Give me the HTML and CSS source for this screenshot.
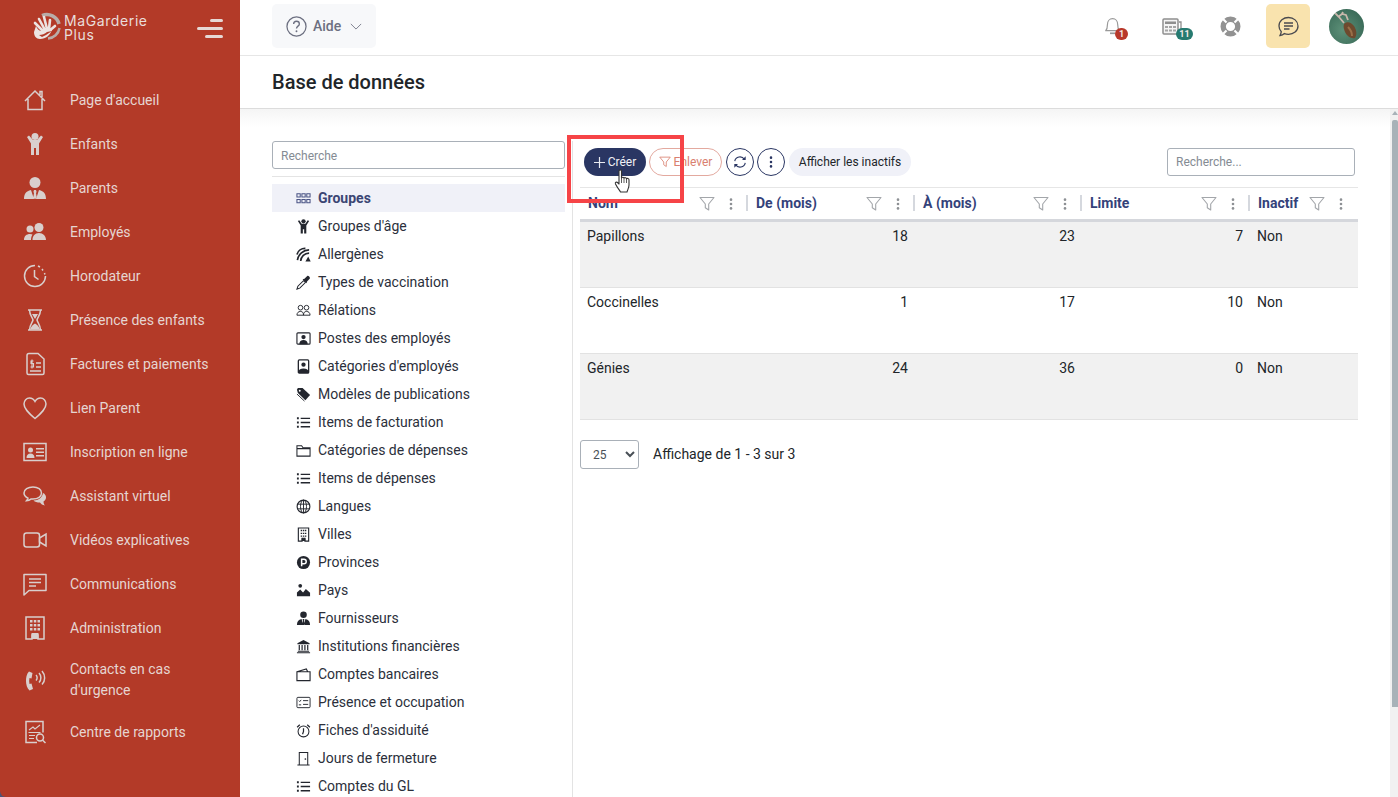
FILE: index.html
```html
<!DOCTYPE html>
<html lang="fr">
<head>
    <meta charset="UTF-8">
    <title>Base de données</title>
    <link rel="stylesheet" href="styles.css">
</head>
<body>
    <svg class="sprite">
        <symbol id="filter" viewBox="0 0 16 16"><path d="M1 1.500h14L9.700 8v6L6.300 11.700V8z" fill="none" stroke="currentColor" stroke-width="1.100" stroke-linejoin="round"/></symbol>
        <symbol id="dots" viewBox="0 0 4 16"><circle cx="2" cy="3" r="1.500" fill="currentColor"/><circle cx="2" cy="8" r="1.500" fill="currentColor"/><circle cx="2" cy="13" r="1.500" fill="currentColor"/></symbol>
        <symbol id="list" viewBox="0 0 16 16"><path d="M5 3.500h10M5 8h10M5 12.500h10" stroke="currentColor" stroke-width="1.400"/><path d="M1 2.500h2v2H1zM1 7h2v2H1zM1 11.500h2v2H1z" fill="currentColor"/></symbol>
    </svg>

    <aside class="sidebar">
        <div class="brand">
            <svg class="brand-mark" width="30" height="30" viewBox="0 0 30 30">
                <path d="M10 4.500A12.500 12.500 0 0 1 27 13" fill="none" stroke="#b9aca8" stroke-width="3.500"/>
                <path d="M27.500 17A12.500 12.500 0 0 1 16 27.500" fill="none" stroke="#b9aca8" stroke-width="2.500"/>
                <path d="M12 21L3 12M13 19L7 8M15 18L12 6M17 18l1-9M16 21l7-6" stroke="#ece4e2" stroke-width="2.600" stroke-linecap="round"/>
                <path d="M4 15c2 5 5 6 9 3l7 1c-2 5-6 9-12 9-4 0-6-3-6-7z" fill="#ece4e2"/>
                <path d="M7 24c3 0 6-1 8-3l5-1-6 4-4 2z" fill="#b33a28"/>
            </svg>
            <div class="brand-name">MaGarderie<br>Plus</div>
            <div class="burger"><span class="bar-short"></span><span class="bar-long"></span><span class="bar-mid"></span></div>
        </div>
        <nav>
            <a class="nav-item"><svg viewBox="0 0 24 24"><path d="M2 13L12 3l10 10M5 11v10.500h14V11M17 7V3.500h2V9" class="ln"/></svg><span>Page d'accueil</span></a>
            <a class="nav-item"><svg viewBox="0 0 24 24"><circle cx="12" cy="4.500" r="3.500" class="fl"/><path d="M4 5l2-1.500 4 4.500h4l4-4.500L20 5l-4 6.500V23h-3v-7h-2v7H8V11.500z" class="fl"/></svg><span>Enfants</span></a>
            <a class="nav-item"><svg viewBox="0 0 24 24"><circle cx="12" cy="6.500" r="5.500" class="fl"/><path d="M1 23c0-5 2-8 7-9l3 9zM23 23c0-5-2-8-7-9l-3 9zM11 14h2l.6 2-.6 1 .8 5-1.800 1-1.800-1 .8-5-.6-1z" class="fl"/></svg><span>Parents</span></a>
            <a class="nav-item"><svg viewBox="0 0 24 24"><circle cx="16" cy="7.500" r="4.500" class="fl"/><circle cx="7" cy="9" r="3.500" class="fl"/><path d="M1 20c0-4 2.500-6 6-6 1 0 2 .2 2.500.5C8.500 16 8 18 8 20zM9.500 20c0-4 2.500-7 6.500-7s7 3 7 7z" class="fl"/></svg><span>Employés</span></a>
            <a class="nav-item"><svg viewBox="0 0 24 24"><path d="M12 1.500A10.500 10.500 0 1 0 22.500 12" class="ln"/><path d="M15 2l2 1M19 5l1 1.500M21.500 9l.4 1.500" class="ln"/><path d="M11.500 6v6.500l4 3" class="ln"/></svg><span>Horodateur</span></a>
            <a class="nav-item"><svg viewBox="0 0 24 24"><path d="M5 2h14M5 22h14M6.500 2c0 5 3 7.500 3.500 10-.5 2.500-3.500 5-3.500 10M17.500 2c0 5-3 7.500-3.500 10 .5 2.500 3.500 5 3.500 10" class="ln"/><path d="M7 21.500c1-3 3-5 5-6 2 1 4 3 5 6zM9 6h6l-3 5z" class="fl"/></svg><span>Présence des enfants</span></a>
            <a class="nav-item"><svg viewBox="0 0 24 24"><path d="M4 3.500c0-1 .5-2 2-2h9l6 5.500v14c0 1-.5 1.500-1.500 1.500H5.500C4.500 22.500 4 22 4 21z" class="ln"/><path d="M13 11h5M13 15h5M7 19h11" class="ln"/><path d="M10.500 9H8v2.500h2.500V15H7.500M9 7.500v9" class="ln-thin"/></svg><span>Factures et paiements</span></a>
            <a class="nav-item"><svg viewBox="0 0 24 24"><path d="M12 22.500C5 16.500 1 12.500 1 8c0-3.500 2.500-6 5.500-6 2.300 0 4.300 1.300 5.500 3.500C13.200 3.300 15.200 2 17.500 2 20.500 2 23 4.500 23 8c0 4.500-4 8.500-11 14.500z" class="ln"/></svg><span>Lien Parent</span></a>
            <a class="nav-item"><svg viewBox="0 0 24 24"><path d="M1 3.500h22v17H1z" class="ln"/><circle cx="7.500" cy="10" r="2.500" class="fl"/><path d="M3.500 18c0-3 1.500-4.500 4-4.500s4 1.500 4 4.500zM13 8h8v1.500h-8zM13 11.500h8V13h-8zM13 15h8v1.500h-8z" class="fl"/></svg><span>Inscription en ligne</span></a>
            <a class="nav-item"><svg viewBox="0 0 24 24"><path d="M10 3C5 3 1 5.500 1 9c0 2.200 1.500 4 4 5.200-.2 1-.8 1.800-1.500 2.600 2 0 3.500-.8 4.800-1.900L10 15c5 0 8.500-2.500 8.500-6S15 3 10 3z" class="ln"/><path d="M20 9c2 1 3 2.500 3 4.500 0 1.800-1 3-2.500 4 0 1.500.5 3 1.500 4-2.500-.5-4-1.500-5-3-3 0-5-.5-6.500-2 5 0 9-3 9.500-7.500z" class="fl"/></svg><span>Assistant virtuel</span></a>
            <a class="nav-item"><svg viewBox="0 0 24 24"><rect x="1" y="5" width="15.500" height="14" rx="2.500" class="ln"/><path d="M16.500 10l6.500-4v12l-6.500-4z" class="ln"/></svg><span>Vidéos explicatives</span></a>
            <a class="nav-item"><svg viewBox="0 0 24 24"><path d="M1 2.500h22v16H6L1 23z" class="ln" stroke-linejoin="round"/><path d="M6 7h12M6 10.500h12M6 14h7" class="ln"/></svg><span>Communications</span></a>
            <a class="nav-item"><svg viewBox="0 0 24 24"><path d="M3 1h18v22h-6v-4H9v4H3z" class="ln"/><path d="M7 4h2.500v2.500H7zM10.800 4h2.500v2.500h-2.500zM14.500 4H17v2.500h-2.500zM7 8h2.500v2.500H7zM10.800 8h2.500v2.500h-2.500zM14.500 8H17v2.500h-2.500zM7 12h2.500v2.500H7zM10.800 12h2.500v2.500h-2.500zM14.500 12H17v2.500h-2.500zM8.500 17h7v6h-7z" class="fl"/></svg><span>Administration</span></a>
            <a class="nav-item nav-item-tall"><svg viewBox="0 0 24 24"><path d="M9.500 5L6 3.500C3.500 6 3 9.500 3 13s1 7 3.500 9.500l3.500-1.500-1.500-5.500-2 .5c-.5-2-.5-4 0-6l2 .5z" class="fl"/><path d="M13 7c1.500 1.500 1.500 4 0 5.500M16 5c2.500 2.500 2.500 7 0 9.500M19 3c3.500 4 3.500 10 0 13.500" class="ln"/></svg><span>Contacts en cas d'urgence</span></a>
            <a class="nav-item"><svg viewBox="0 0 24 24"><path d="M14 22.500H3v-21h17v11" class="ln"/><path d="M6 10l4-3 2 2 5-4M5.500 12.500h12M6 15.500h6M6 18.500h5" class="ln-thin"/><circle cx="17" cy="17.500" r="3.500" class="ln"/><path d="M19.500 20l3 3" class="ln"/></svg><span>Centre de rapports</span></a>
        </nav>
    </aside>

    <div class="main">
        <header class="topbar">
            <button class="help-btn">
                <svg width="21" height="21" viewBox="0 0 22 22"><circle cx="11" cy="11" r="10" fill="none" stroke="#6c6f80" stroke-width="1.300"/><path d="M8 8.500c0-2 1.500-3 3-3s3 1 3 2.800c0 2.300-3 2.300-3 4.700" fill="none" stroke="#6c6f80" stroke-width="1.400"/><circle cx="11" cy="16" r="1" fill="#6c6f80"/></svg>
                <span>Aide</span>
                <svg width="12" height="7" viewBox="0 0 14 8"><path d="M1 1l6 6 6-6" fill="none" stroke="#6c6f80" stroke-width="1"/></svg>
            </button>
            <div class="top-icons">
                <div class="top-icon top-bell">
                    <svg width="18" height="20" viewBox="0 0 21 23"><path d="M2 17c2-2 2-4 2-7 0-4 2.500-7 6-7s6 3 6 7c0 3 0 5 2 7z" fill="none" stroke="#999" stroke-width="1.400" stroke-linejoin="round"/><path d="M7 20h6" stroke="#999" stroke-width="2"/></svg>
                    <span class="badge badge-red">1</span>
                </div>
                <div class="top-icon top-news">
                    <svg width="20" height="17" viewBox="0 0 20 17"><rect x="1" y="1" width="15" height="15" rx="1" fill="#f4f4f4" stroke="#8f8f8f" stroke-width="1.500"/><path d="M3 3.500h11v2.500H3z" fill="#8f8f8f"/><path d="M3 8h3v2H3zM7 8h3v2H7zM11 8h3v2h-3zM3 11.500h3v2H3zM7 11.500h3v2H7zM11 11.500h3v2h-3z" fill="#a5a5a5"/><path d="M17 4h2v11h-2" fill="none" stroke="#8f8f8f" stroke-width="1.300"/></svg>
                    <span class="badge badge-green">11</span>
                </div>
                <div class="top-icon top-ring">
                    <svg width="21" height="21" viewBox="0 0 21 21"><circle cx="10.500" cy="10.500" r="7.300" fill="none" stroke="#929292" stroke-width="5.400"/><path d="M2.500 2.500l4 4M18.500 2.500l-4 4M2.500 18.500l4-4M18.500 18.500l-4-4" stroke="#fff" stroke-width="2.200"/></svg>
                </div>
                <button class="chat-btn">
                    <svg width="21" height="21" viewBox="0 0 21 21"><path d="M10.500 1.500c-5 0-9.500 3.300-9.500 8.500 0 2.500 1 4.300 2.300 5.700-.2 1.500-.6 2.500-1.300 3.800 1.800-.2 3.300-.9 4.400-1.900 1.200.5 2.600.7 4.100.7 5 0 9.500-3.300 9.500-8.300s-4.500-8.500-9.500-8.500z" fill="none" stroke="#4a4a4f" stroke-width="1.300"/><path d="M6 7h9M6 10h9M6 13h5.500" stroke="#4a4a4f" stroke-width="1.500"/></svg>
                </button>
                <div class="avatar">
                    <svg width="35" height="35" viewBox="0 0 35 35"><path d="M15 15c3-3 7-2 10 2 3 5 3 9 1 12-4 1-8-2-10-6-1-3-2-5-1-8z" fill="#6e4a2e"/><path d="M19 18c2 2 4 6 4 9" stroke="#9a7048" stroke-width="2" fill="none"/><path d="M5 3l5 5 5 6M9 8l4-3 4 1 2 5M13 5l1-2" stroke="#c9b8ac" stroke-width="1.800" fill="none"/></svg>
                </div>
            </div>
        </header>
        <div class="page-title"><h1>Base de données</h1></div>
        <div class="content">
            <div class="content-inner">
                <section class="side-list">
                    <input class="side-search" type="text" placeholder="Recherche">
                    <hr class="side-rule">
                    <ul class="db-list">
                        <li class="active"><svg viewBox="0 0 16 16"><path d="M1 3h3.500v3.500H1zM6.300 3h3.500v3.500H6.300zM11.500 3H15v3.500h-3.500zM1 9h3.500v3.500H1zM6.300 9h3.500v3.500H6.300zM11.500 9H15v3.500h-3.500z" fill="none" stroke="currentColor" stroke-width="1.100"/></svg>Groupes</li>
                        <li><svg viewBox="0 0 16 16"><circle cx="8" cy="2.500" r="2.300" fill="currentColor"/><path d="M2 2l1.500-.7L6 5h4l2.500-3.700L14 2l-3 5v8.500H8.700V11H7.300v4.500H5V7z" fill="currentColor"/></svg>Groupes d'âge</li>
                        <li><svg viewBox="0 0 16 16"><path d="M1 8A9 9 0 0 1 10 1.500M1.500 14A13 13 0 0 1 14 3M5 15A9 9 0 0 1 14 6.500" fill="none" stroke="currentColor" stroke-width="1.800"/><path d="M10 15.500l3-5.500 2.700 5.500z" fill="currentColor"/></svg>Allergènes</li>
                        <li><svg viewBox="0 0 16 16"><path d="M1 15l1-3 6-6 2 2-6 6z" fill="none" stroke="currentColor" stroke-width="1.100"/><path d="M7 4.500l2-.5 3-3c1-.8 3.500 1.500 2.800 2.800l-3 3-.5 2z" fill="currentColor"/></svg>Types de vaccination</li>
                        <li><svg viewBox="0 0 16 16"><circle cx="4.800" cy="5" r="2.500" fill="none" stroke="currentColor"/><circle cx="11.200" cy="5" r="2.500" fill="none" stroke="currentColor"/><path d="M1 13c0-2.500 1.500-4 3.800-4s3.200 1.500 3.200 4zM8 13c0-2.500 1-4 3.200-4S15 10.500 15 13z" fill="none" stroke="currentColor"/></svg>Rélations</li>
                        <li><svg viewBox="0 0 16 16"><rect x="1" y="2" width="14" height="12" rx="1" fill="none" stroke="currentColor" stroke-width="1.200"/><circle cx="8" cy="6.500" r="2.300" fill="currentColor"/><path d="M3.500 14c0-3 2-4.500 4.500-4.500s4.500 1.500 4.500 4.500z" fill="currentColor"/></svg>Postes des employés</li>
                        <li><svg viewBox="0 0 16 16"><rect x="2.500" y="1" width="11" height="14" rx="1" fill="none" stroke="currentColor" stroke-width="1.400"/><circle cx="8" cy="6" r="2.300" fill="currentColor"/><path d="M3 15v-2c0-2 2-3 5-3s5 1 5 3v2z" fill="currentColor"/></svg>Catégories d'employés</li>
                        <li><svg viewBox="0 0 16 16"><path d="M1 3l1-2h5l8 7.500-5 5.500-8-7.500z" fill="currentColor"/><path d="M1 7.500l8 7.500" stroke="currentColor" fill="none"/><circle cx="4" cy="4" r="1" fill="#fff"/></svg>Modèles de publications</li>
                        <li><svg viewBox="0 0 16 16"><use href="#list"/></svg>Items de facturation</li>
                        <li><svg viewBox="0 0 16 16"><path d="M1 3h5l1.500 2H15v9H1zM1 6h14" fill="none" stroke="currentColor" stroke-width="1.100"/></svg>Catégories de dépenses</li>
                        <li><svg viewBox="0 0 16 16"><use href="#list"/></svg>Items de dépenses</li>
                        <li><svg viewBox="0 0 16 16"><circle cx="8" cy="8" r="6.800" fill="none" stroke="currentColor" stroke-width="1.200"/><ellipse cx="8" cy="8" rx="3.200" ry="6.800" fill="none" stroke="currentColor"/><path d="M8 1v14M1.500 5.500h13M1.500 10.500h13" stroke="currentColor" fill="none"/></svg>Langues</li>
                        <li><svg viewBox="0 0 16 16"><path d="M2.500 1h11v14h-4v-3h-3v3h-4z" fill="none" stroke="currentColor" stroke-width="1.200"/><path d="M5 3h1.500v1.500H5zM7.300 3h1.500v1.500H7.300zM9.500 3H11v1.500H9.500zM5 6h1.500v1.500H5zM7.300 6h1.500v1.500H7.300zM9.500 6H11v1.500H9.500zM5 9h1.500v1.500H5zM7.300 9h1.500v1.500H7.300zM9.500 9H11v1.500H9.500zM6 12h4v3H6z" fill="currentColor"/></svg>Villes</li>
                        <li><svg viewBox="0 0 16 16"><circle cx="8" cy="8" r="7" fill="currentColor"/><path d="M6 12V4.500h2.500a2.300 2.300 0 0 1 0 4.800H6" fill="none" stroke="#fff" stroke-width="1.600"/></svg>Provinces</li>
                        <li><svg viewBox="0 0 16 16"><circle cx="4.500" cy="3" r="2" fill="currentColor"/><path d="M1 14v-4l3.500-3 3 3 3-3.500 4.500 4V14z" fill="currentColor"/></svg>Pays</li>
                        <li><svg viewBox="0 0 16 16"><circle cx="8" cy="4" r="3.500" fill="currentColor"/><path d="M1 15c0-3.500 1.500-6 5-6.500l1.500 6.500zM15 15c0-3.500-1.500-6-5-6.500L8.500 15zM7.300 8.500h1.400l.3 1.200-.4.600.6 3.700-1.200 1-1.200-1 .6-3.700-.4-.6z" fill="currentColor"/></svg>Fournisseurs</li>
                        <li><svg viewBox="0 0 16 16"><path d="M8 1l6.500 3.500v1h-13v-1zM1 14h14v1.200H1zM2 12.500h12v1H2z" fill="currentColor"/><path d="M3.500 6.500v5.500M6.500 6.500v5.500M9.500 6.500v5.500M12.500 6.500v5.500" stroke="currentColor" stroke-width="1.300"/></svg>Institutions financières</li>
                        <li><svg viewBox="0 0 16 16"><path d="M1 5h14v9.500H1zM1 5l10-3 1.500 3" fill="none" stroke="currentColor" stroke-width="1.200"/></svg>Comptes bancaires</li>
                        <li><svg viewBox="0 0 16 16"><rect x="1" y="2.500" width="14" height="11" rx="1" fill="none" stroke="currentColor"/><path d="M7.500 6H13M7.500 10H13M3 6l1 1 1.500-1.800M3 10.500h2.500" fill="none" stroke="currentColor"/></svg>Présence et occupation</li>
                        <li><svg viewBox="0 0 16 16"><circle cx="8" cy="9" r="5.800" fill="none" stroke="currentColor" stroke-width="1.100"/><path d="M8 5.500V9l-1 3M1.200 4.500L4 1.800M14.800 4.500L12 1.800" fill="none" stroke="currentColor" stroke-width="1.300"/></svg>Fiches d'assiduité</li>
                        <li><svg viewBox="0 0 16 16"><path d="M1.500 15h13M3.500 15V1.500h9V15" fill="none" stroke="currentColor" stroke-width="1.100"/><circle cx="10" cy="8.500" r=".9" fill="currentColor"/></svg>Jours de fermeture</li>
                        <li><svg viewBox="0 0 16 16"><use href="#list"/></svg>Comptes du GL</li>
                    </ul>
                </section>
                <section class="grid-panel">
                    <div class="toolbar">
                        <button class="btn btn-create"><svg width="11" height="11" viewBox="0 0 11 11"><path d="M5.500 0v11M0 5.500h11" stroke="#e8e9f0" stroke-width="1.200"/></svg>Créer</button>
                        <button class="btn btn-remove"><svg width="12" height="12" viewBox="0 0 16 16"><use href="#filter"/></svg>Enlever</button>
                        <button class="btn-round"><svg width="14" height="14" viewBox="0 0 16 16"><path d="M2 7a6 6 0 0 1 11-2M14 9a6 6 0 0 1-11 2" fill="none" stroke="#2a3663" stroke-width="1.300"/><path d="M14.500 1.500v4.200h-4.200zM1.500 14.500v-4.200h4.200z" fill="#2a3663"/></svg></button>
                        <button class="btn-round"><svg width="4" height="14" viewBox="0 0 4 16"><use href="#dots"/></svg></button>
                        <button class="btn btn-inactive">Afficher les inactifs</button>
                        <input class="grid-search" type="text" placeholder="Recherche...">
                    </div>
                    <div class="data-grid">
                        <div class="head-cell"><span>Nom</span><svg class="ic-filter"><use href="#filter"/></svg><svg class="ic-dots"><use href="#dots"/></svg></div>
                        <div class="head-cell"><span>De (mois)</span><svg class="ic-filter"><use href="#filter"/></svg><svg class="ic-dots"><use href="#dots"/></svg></div>
                        <div class="head-cell"><span>À (mois)</span><svg class="ic-filter"><use href="#filter"/></svg><svg class="ic-dots"><use href="#dots"/></svg></div>
                        <div class="head-cell"><span>Limite</span><svg class="ic-filter"><use href="#filter"/></svg><svg class="ic-dots"><use href="#dots"/></svg></div>
                        <div class="head-cell head-last"><span>Inactif</span><svg class="ic-filter"><use href="#filter"/></svg><svg class="ic-dots"><use href="#dots"/></svg></div>

                        <div class="cell odd">Papillons</div><div class="cell num odd">18</div><div class="cell num odd">23</div><div class="cell num odd">7</div><div class="cell odd">Non</div>
                        <div class="cell">Coccinelles</div><div class="cell num">1</div><div class="cell num">17</div><div class="cell num">10</div><div class="cell">Non</div>
                        <div class="cell odd">Génies</div><div class="cell num odd">24</div><div class="cell num odd">36</div><div class="cell num odd">0</div><div class="cell odd">Non</div>
                    </div>
                    <div class="pager">
                        <select class="page-size"><option>25</option></select>
                        <span>Affichage de 1 - 3 sur 3</span>
                    </div>
                </section>
            </div>
            <div class="scrollbar"><div class="scroll-arrow"></div><div class="scroll-thumb"></div></div>
        </div>
    </div>

    <!-- annotation + mouse pointer over the page -->
    <div class="callout"></div>
    <svg class="pointer" width="18" height="24" viewBox="0 0 18 24"><path d="M5 2c0-1.500 2.500-1.500 2.500 0v7c.5-1 2.500-1 2.500.3.500-1 2.500-.8 2.500.5.700-.8 2.500-.5 2.500 1V16c0 3-1.500 5-2 7H6.500c-1-2-3-4-5-8-.7-1.500 1-2.500 2-1.500L5 15z" fill="#fff" stroke="#333" stroke-width="1.100" stroke-linejoin="round"/><path d="M7.500 9v5M10 9.500V14M12.500 10v4" stroke="#333" stroke-width=".8"/></svg>
</body>
</html>
```

FILE: styles.css
```css
* {
    box-sizing: border-box;
}

body {
    margin: 0;
    height: 100vh;
    display: flex;
    overflow: hidden;
    background-color: #4a5578;
    font-family: Roboto, "Liberation Sans", sans-serif;
    font-size: 14px;
    line-height: 21px;
    color: #212529;
}

.sprite {
    display: none;
}

/* sidebar */
.sidebar {
    width: 240px;
    flex-shrink: 0;
    background-color: #b33a28;
    border-bottom-left-radius: 6px;
    color: #e6d5d1;
}

.brand {
    height: 78px;
    display: flex;
    padding: 11px 17px 0 32px;
    align-items: flex-start;
}

.brand-mark {
    flex-shrink: 0;
}

.brand-name {
    margin-left: 2px;
    margin-top: 3px;
    font-family: Inter, sans-serif;
    font-size: 14px;
    line-height: 14px;
    letter-spacing: 0.6px;
    color: #e9dedb;
}

.burger {
    margin-left: auto;
    margin-top: 8px;
    width: 26px;
    display: flex;
    flex-direction: column;
    align-items: flex-end;
    gap: 5px;
}

.burger span {
    height: 3px;
    border-radius: 2px;
    background-color: #e6d8d5;
}

.bar-short {
    width: 13px;
}

.bar-long {
    width: 26px;
}

.bar-mid {
    width: 18px;
}

.nav-item {
    display: flex;
    align-items: center;
    min-height: 44px;
    padding: 9px 22px 9px 23px;
}

.nav-item svg {
    width: 24px;
    height: 24px;
    flex-shrink: 0;
    margin-right: 23px;
}

.ln {
    fill: none;
    stroke: #d9cfcd;
    stroke-width: 1.5;
}

.ln-thin {
    fill: none;
    stroke: #d9cfcd;
    stroke-width: 1.1;
}

.fl {
    fill: #d9cfcd;
}

/* top bar */
.main {
    flex: 1;
    min-width: 0;
    display: flex;
    flex-direction: column;
    background-color: #fff;
}

.topbar {
    height: 56px;
    flex-shrink: 0;
    display: flex;
    align-items: flex-start;
    padding: 4px 34px 0 32px;
    border-bottom: 1px solid #e6e6e6;
}

.help-btn {
    width: 104px;
    height: 44px;
    display: flex;
    align-items: center;
    padding: 0 0 0 14px;
    border: none;
    border-radius: 5px;
    background-color: #f7f8fa;
    color: #6c6f80;
    font: 500 14px Roboto, sans-serif;
}

.help-btn span {
    margin: 0 9px 0 6px;
}

.top-icons {
    margin-left: auto;
    display: flex;
    align-items: center;
}

.top-icon {
    position: relative;
    display: flex;
    justify-content: center;
}

.top-bell {
    width: 18px;
    margin-right: 40px;
}

.top-news {
    width: 20px;
    margin-right: 38px;
}

.top-ring {
    width: 21px;
    margin-right: 25px;
}

.badge {
    position: absolute;
    height: 12px;
    border-radius: 6px;
    font-size: 9px;
    font-weight: 700;
    line-height: 12px;
    text-align: center;
    color: #f3e9e6;
}

.badge-red {
    left: 11px;
    top: 12px;
    width: 13px;
    background-color: #b8382a;
}

.badge-green {
    left: 14px;
    top: 10px;
    width: 17px;
    background-color: #267a70;
}

.chat-btn {
    width: 44px;
    height: 44px;
    display: flex;
    align-items: center;
    justify-content: center;
    margin-right: 19px;
    border: none;
    border-radius: 5px;
    background-color: #f9e3ae;
}

.avatar {
    width: 35px;
    height: 35px;
    border-radius: 50%;
    overflow: hidden;
    background: radial-gradient(circle at 40% 60%, #5d9078, #2f5f4e);
}

.avatar svg {
    display: block;
}

/* page title */
.page-title {
    height: 53px;
    flex-shrink: 0;
    display: flex;
    align-items: center;
    padding: 1px 32px 0;
    border-bottom: 1px solid #dcdcdc;
}

.page-title h1 {
    margin: 0;
    font-size: 20px;
    font-weight: 500;
    color: #212529;
}

/* content */
.content {
    flex: 1;
    min-height: 0;
    display: flex;
}

.content-inner {
    flex: 1;
    display: flex;
    padding-left: 32px;
    overflow: hidden;
    background: linear-gradient(#f5f5f5, #fff 18px);
}

.side-list {
    width: 301px;
    flex-shrink: 0;
    margin-top: 32px;
    padding-right: 7px;
    border-right: 1px solid #e3e3e3;
}

.side-search,
.grid-search {
    height: 28px;
    border: 1px solid #a9b0b8;
    border-radius: 3px;
    padding: 0 8px;
    font: 12px Roboto, sans-serif;
    color: #212529;
}

.side-search::placeholder,
.grid-search::placeholder {
    color: #848b93;
}

.side-search {
    width: 100%;
    display: block;
    padding-top: 1px;
}

.side-rule {
    margin: 7px 0;
    border: none;
    border-top: 1px solid #e4e4e4;
}

.db-list {
    list-style: none;
    margin: 0;
    padding: 0;
}

.db-list li {
    height: 28px;
    display: flex;
    align-items: center;
    padding-left: 24px;
    color: #2b2f3b;
}

.db-list li svg {
    width: 15px;
    height: 15px;
    margin-right: 7px;
    flex-shrink: 0;
    color: #23262e;
}

.db-list li.active {
    background-color: #f0f1f8;
    color: #3b4573;
    font-weight: 700;
}

.db-list li.active svg {
    color: #4a5485;
}

/* grid panel */
.grid-panel {
    width: 785px;
    flex-shrink: 0;
    padding: 39px 0 0 7px;
}

.toolbar {
    height: 28px;
    display: flex;
    align-items: center;
    padding: 0 3px 0 4px;
    margin-bottom: 11px;
}

.btn {
    height: 28px;
    display: flex;
    align-items: center;
    justify-content: center;
    padding: 0;
    border: 1px solid transparent;
    border-radius: 14px;
    font: 12px Roboto, sans-serif;
}

.btn svg {
    margin-right: 3px;
}

.btn-create {
    width: 62px;
    background-color: #2a3663;
    color: #f0f1f6;
}

.btn-remove {
    width: 73px;
    margin-left: 3px;
    background-color: #fff;
    border-color: #e3a99f;
    color: #d9806f;
}

.btn-round {
    width: 28px;
    height: 28px;
    display: flex;
    align-items: center;
    justify-content: center;
    margin-left: 4px;
    padding: 0;
    border: 1px solid #2a3663;
    border-radius: 50%;
    background-color: #fff;
    color: #2a3663;
}

.btn-round + .btn-round {
    margin-left: 3px;
}

.btn-inactive {
    width: 122px;
    margin-left: 4px;
    background-color: #f0f1f8;
    color: #212529;
}

.grid-search {
    width: 188px;
    margin-left: auto;
}

.data-grid {
    width: 778px;
    display: grid;
    grid-template-columns: 168px 167px 167px 168px 1fr;
    border-top: 1px solid #e6e6e6;
}

.head-cell {
    height: 34px;
    display: flex;
    align-items: center;
    padding: 0 15px 0 8px;
    border-bottom: 3px solid #d5d7dc;
    background-image: linear-gradient(#d5d8de, #d5d8de);
    background-size: 2px 16px;
    background-position: right 7px;
    background-repeat: no-repeat;
    font-weight: 700;
    color: #34427a;
}

.head-last {
    background-image: none;
}

.ic-filter {
    width: 16px;
    height: 16px;
    margin-left: auto;
    color: #a3a6aa;
}

.ic-dots {
    width: 4px;
    height: 14px;
    margin-left: 14px;
    color: #8d9094;
}

.cell {
    height: 66px;
    padding: 4px 7px;
    border-bottom: 1px solid #e2e2e2;
}

.num {
    text-align: right;
}

.odd {
    background-color: #f1f1f1;
}

.pager {
    margin-top: 20px;
    display: flex;
    align-items: center;
}

.page-size {
    width: 59px;
    height: 29px;
    padding-left: 8px;
    margin-right: 14px;
    border: 1px solid #a9b0b8;
    border-radius: 3px;
    background-color: #fff;
    font: 12px Roboto, sans-serif;
    color: #495057;
}

.scrollbar {
    width: 8px;
    flex-shrink: 0;
    padding: 2px 0 0 2px;
    background-color: #f1f1f1;
}

.scroll-arrow {
    width: 0;
    margin: 0 auto 5px;
    border-left: 3px solid transparent;
    border-right: 3px solid transparent;
    border-bottom: 4px solid #a8b2b8;
}

.scroll-thumb {
    height: 587px;
    border-radius: 2px 2px 0 0;
    background-color: #a8b2b8;
}

/* overlays */
.callout {
    position: absolute;
    left: 567px;
    top: 135px;
    width: 117px;
    height: 68px;
    border: 4px solid #f64447;
}

.pointer {
    position: absolute;
    left: 614px;
    top: 169px;
}
```
